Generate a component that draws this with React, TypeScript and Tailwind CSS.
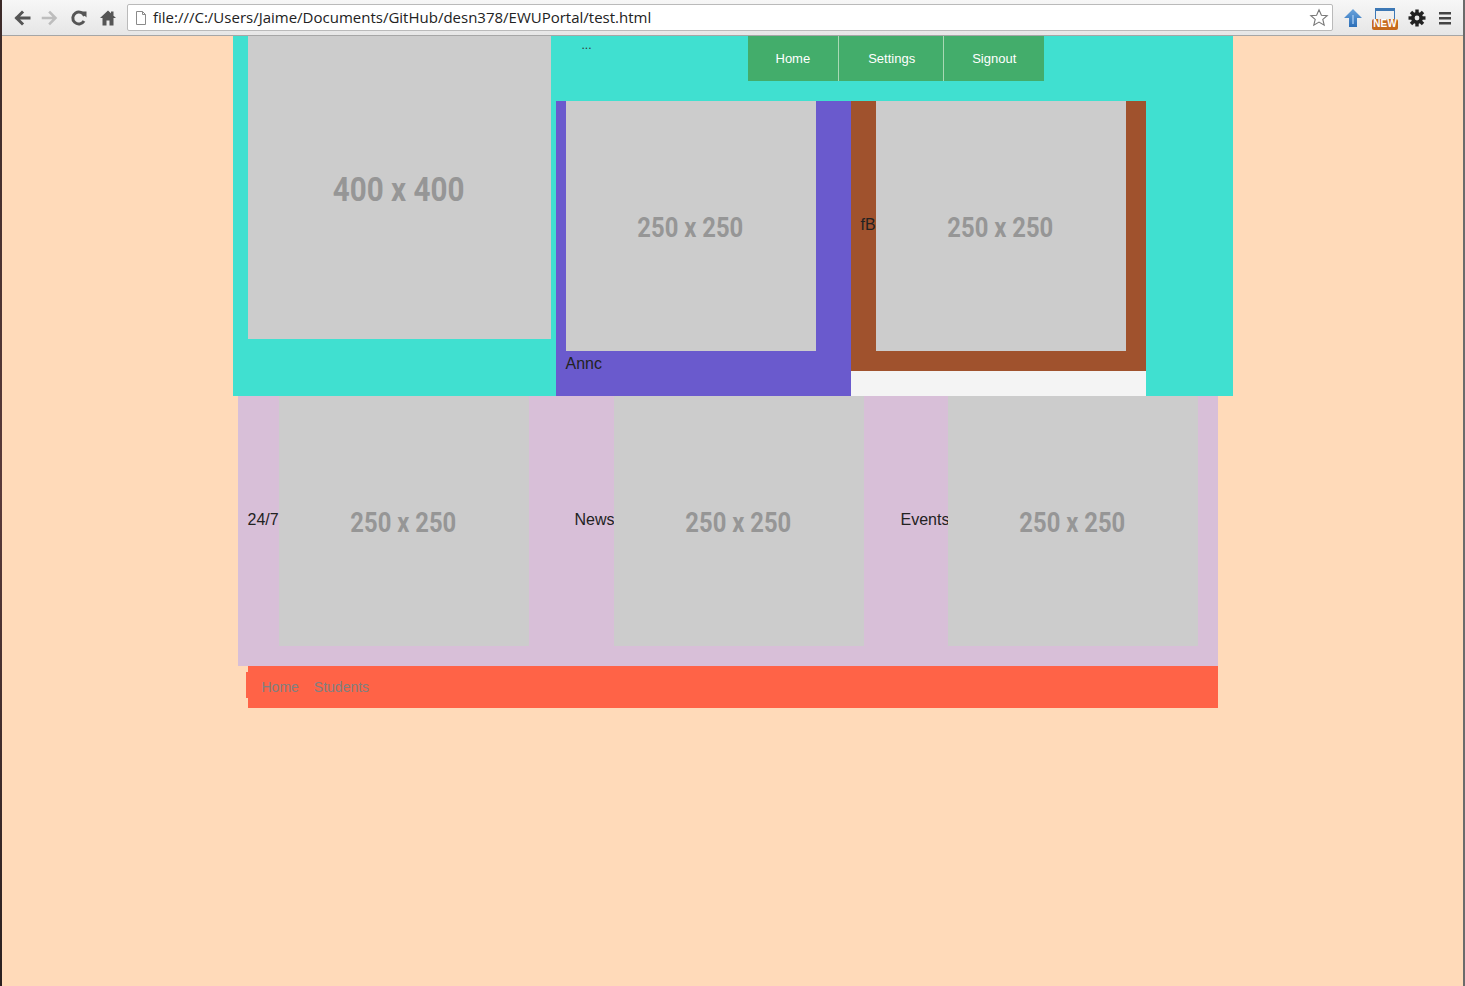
import React from "react";

const Placeholder = ({ w, h, label, big }: { w: string; h: string; label: string; big?: boolean }) => (
  <div className={`${w} ${h} shrink-0 bg-[#cccccc] flex items-center justify-center pt-[4px]`}>
    <span
      className={`font-bold text-[#969696] whitespace-nowrap ${big ? "text-[34px] scale-x-[0.87]" : "text-[28px] scale-x-[0.85]"}`}
      style={{ fontFamily: "Roboto, 'DejaVu Sans', sans-serif" }}
    >
      {label}
    </span>
  </div>
);

const Chrome = () => (
  <div className="h-[36px] shrink-0 bg-gradient-to-b from-[#f7f7f7] to-[#e6e6e6] border-b border-[#a6a6a6] flex items-center">
    <div className="flex items-center w-[125px] pl-[10px] gap-[8px]">
      <svg width="20" height="20" viewBox="0 0 20 20">
        <path d="M17 10H5M10 4.5L4.5 10L10 15.5" fill="none" stroke="#555" strokeWidth="3" strokeLinecap="square" />
      </svg>
      <svg width="20" height="20" viewBox="0 0 20 20">
        <path d="M3 10H15M10 4.5L15.5 10L10 15.5" fill="none" stroke="#bdbdbd" strokeWidth="2.5" strokeLinecap="square" />
      </svg>
      <svg width="22" height="20" viewBox="0 0 20 20">
        <path d="M15.5 8A6 6 0 1 0 15 13" fill="none" stroke="#555" strokeWidth="3" />
        <path d="M11.5 3.5L17.5 3.5L17.5 9.5Z" fill="#555" />
      </svg>
      <svg width="20" height="20" viewBox="0 0 20 20">
        <path d="M10 2.5L2 10H4.5V17.5H8.5V12.5H11.5V17.5H15.5V10H18Z" fill="#555" />
        <rect x="13" y="3.5" width="2.5" height="4" fill="#555" />
      </svg>
    </div>
    <div className="flex-1 h-[27px] mr-[2px] bg-white border border-[#bababa] rounded-[2px] flex items-center pl-[6px] relative">
      <svg width="14" height="16" viewBox="0 0 14 16" className="mr-[5px]">
        <path d="M2.5 1.5H8.5L11.5 4.5V14.5H2.5Z M8.5 1.5V4.5H11.5" fill="#fff" stroke="#8a8a8a" strokeWidth="1" />
      </svg>
      <span className="text-[15px] text-[#222]" style={{ fontFamily: "'Open Sans', 'Liberation Sans', sans-serif" }}>
        file:///C:/Users/Jaime/Documents/GitHub/desn378/EWUPortal/test.html
      </span>
      <svg width="20" height="20" viewBox="0 0 20 20" className="absolute right-[3px] top-[3px]">
        <path d="M10 1.8L12.4 7.2L18.2 7.6L13.8 11.4L15.2 17.2L10 14.1L4.8 17.2L6.2 11.4L1.8 7.6L7.6 7.2Z" fill="none" stroke="#777" strokeWidth="1.1" />
      </svg>
    </div>
    <div className="flex items-center gap-[9px] pl-[8px] pr-[9px]">
      <svg width="20" height="22" viewBox="0 0 20 22">
        <defs>
          <linearGradient id="ua" x1="0" y1="0" x2="0" y2="1">
            <stop offset="0" stopColor="#6aa3dc" />
            <stop offset="1" stopColor="#2c6fb8" />
          </linearGradient>
        </defs>
        <path d="M10 2L19 11H14V20H6V11H1Z" fill="url(#ua)" />
        <path d="M10 8V17" stroke="#9cc4ee" strokeWidth="1.5" />
      </svg>
      <div className="relative w-[26px] h-[24px]">
        <div className="absolute left-[3px] top-[2px] w-[20px] h-[14px] border border-[#3d78b5] border-t-[3px]" />
        <div className="absolute left-0 bottom-0 w-[26px] h-[11px] bg-[#c76a1c] rounded-[2px] flex items-center justify-center">
          <span className="text-[10px] leading-none font-bold text-white" style={{ fontFamily: "'Liberation Sans', Arial, sans-serif" }}>NEW</span>
        </div>
      </div>
      <svg width="20" height="20" viewBox="0 0 20 20">
        <g fill="#222">
          <circle cx="10" cy="10" r="6" />
          {[0, 45, 90, 135, 180, 225, 270, 315].map((a) => (
            <rect key={a} x="8.3" y="1.5" width="3.4" height="4" transform={`rotate(${a} 10 10)`} />
          ))}
        </g>
        <circle cx="10" cy="10" r="2.4" fill="#ececec" />
      </svg>
      <svg width="18" height="20" viewBox="0 0 18 20">
        <g fill="#444">
          <rect x="3" y="4" width="12" height="2.5" />
          <rect x="3" y="9" width="12" height="2.5" />
          <rect x="3" y="14" width="12" height="2.5" />
        </g>
      </svg>
    </div>
  </div>
);

export default function App() {
  const sans = { fontFamily: "'Liberation Sans', Arial, sans-serif" };
  return (
    <div className="w-[1465px] h-[986px] flex overflow-hidden" style={sans}>
      <div className="w-[2px] h-full bg-gradient-to-b from-[#3b2a28] via-[#5a3a3a] to-[#2a2020] shrink-0" />
      <div className="flex-1 flex flex-col">
        <Chrome />
        <div className="flex-1 bg-[#ffdab9] flex flex-col items-center">
          <div className="w-[1000px] flex flex-col">
            {/* header */}
            <div className="h-[360px] bg-[#40e0d0] flex">
              <div className="pl-[15px]">
                <Placeholder w="w-[303px]" h="h-[303px]" label="400 x 400" big />
              </div>
              <div className="ml-[5px] flex flex-col">
                <div className="h-[65px] flex">
                  <div className="w-[192px] pl-[26px] pt-[3px] text-[12px] text-[#333] leading-none">...</div>
                  <nav className="flex h-[45px] bg-[#43ad6b] text-white text-[13px]">
                    <a className="px-[28px] flex items-center">Home</a>
                    <div className="w-[1px] bg-[#a9d8b4]" />
                    <a className="pl-[29px] pr-[28px] flex items-center">Settings</a>
                    <div className="w-[1px] bg-[#a9d8b4]" />
                    <a className="px-[28px] flex items-center">Signout</a>
                  </nav>
                </div>
                <div className="flex">
                  <div className="w-[295px] h-[295px] bg-[#6a5acd] pl-[10px] flex flex-col">
                    <Placeholder w="w-[250px]" h="h-[250px]" label="250 x 250" />
                    <div className="pt-[4px] text-[16px] text-[#222] leading-[18px]">Annc</div>
                  </div>
                  <div className="w-[295px] flex flex-col">
                    <div className="h-[270px] bg-[#a0522d] pl-[10px] flex items-start">
                      <div className="h-[250px] flex items-center text-[16px] text-[#222] w-[15px] pb-[2px]">fB</div>
                      <Placeholder w="w-[250px]" h="h-[250px]" label="250 x 250" />
                    </div>
                    <div className="h-[25px] bg-[#f4f4f4]" />
                  </div>
                </div>
              </div>
            </div>
            {/* content row */}
            <div className="ml-[5px] w-[980px] h-[270px] bg-[#d8bfd8] flex items-start pl-[10px]">
              <div className="h-[250px] flex items-center text-[16px] text-[#222] w-[31px] pb-[2px]">24/7</div>
              <Placeholder w="w-[250px]" h="h-[250px]" label="250 x 250" />
              <div className="ml-[46px] h-[250px] flex items-center text-[16px] text-[#222] w-[39px] pb-[2px]">News</div>
              <Placeholder w="w-[250px]" h="h-[250px]" label="250 x 250" />
              <div className="ml-[37px] h-[250px] flex items-center text-[16px] text-[#222] w-[47px] pb-[2px]">Events</div>
              <Placeholder w="w-[250px]" h="h-[250px]" label="250 x 250" />
            </div>
            {/* footer */}
            <div className="ml-[13px] flex items-start">
              <div className="w-[2px] h-[26px] mt-[6px] bg-[#ff6347]" />
              <div className="w-[970px] h-[42px] bg-[#ff6347] flex items-center pl-[14px] gap-[15px] text-[14px] text-[#808080]">
                <a>Home</a>
                <a>Students</a>
              </div>
            </div>
          </div>
        </div>
      </div>
      <div className="w-[2px] h-full bg-[#6b6b6b] shrink-0" />
    </div>
  );
}
